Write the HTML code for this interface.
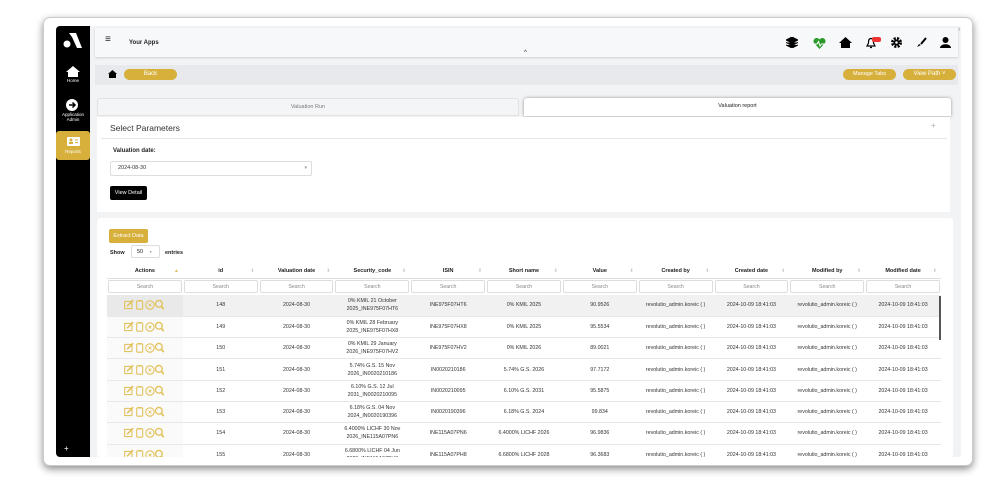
<!DOCTYPE html>
<html><head><meta charset="utf-8"><style>
*{box-sizing:border-box;margin:0;padding:0}
body{width:998px;height:483px;background:#fff;font-family:"Liberation Sans",sans-serif;position:relative;overflow:hidden;color:#222}
.a{position:absolute}
svg{display:block}
.frame{left:43px;top:17px;width:930px;height:449px;background:#fff;border-radius:7px;box-shadow:0 3px 8px rgba(0,0,0,.45);border:1px solid #ccc}
.side{left:56px;top:26px;width:34px;height:431px;background:#000;border-radius:4px 0 0 4px}
.main{left:90px;top:26px;width:871px;height:431px;background:#f2f3f5}
.hdr{left:95px;top:28px;width:863px;height:29px;background:#f7f8fa;box-shadow:0 1px 2px rgba(0,0,0,.15)}
.bc{left:95px;top:65px;width:863px;height:20px;background:#e7e9ec}
.btn{background:#d6b03a;color:#fff;border-radius:8px;font-size:6px;height:11px;line-height:11px;text-align:center}
.tab{font-size:5.5px;text-align:center;line-height:17px;color:#777}
.panel{background:#fff}
.sl{font-size:4.5px;color:#fff;text-align:center;width:34px;left:56px}
table{border-collapse:collapse;font-size:5.3px;table-layout:fixed}
td,th{text-align:center;overflow:hidden;white-space:nowrap}
th{height:13px;font-weight:bold;border-bottom:1px solid #ddd;position:relative;font-size:5.5px}
th span{position:absolute;right:4px;top:3px;color:#ccc;font-size:5px;font-weight:normal}
.sr td{height:17px;padding:1px 1px}
.sr div{border:1px solid #ddd;border-radius:2px;height:13px;line-height:12px;color:#888;font-size:5.2px}
.dr td{height:21.3px;border-bottom:1px solid #e8e8e8;line-height:8px;color:#333}
.dr td:first-child{background:#fafafa}
.dr:first-child td{background:#f1f1f1}
.dr:first-child td:first-child{background:#e9e9e9}
.ic{display:inline-block;vertical-align:middle}
</style></head><body>
<svg width="0" height="0" style="position:absolute"><defs>
<g id="act" fill="none" stroke="#e2c15a" stroke-width="0.9">
<rect x="1" y="2" width="6" height="6"/><path d="M3 6 L8 1" stroke-width="1.3"/>
<rect x="11" y="1.5" width="5" height="7" rx="0.8"/><path d="M12 1.5 h3" stroke-width="1.2"/>
<circle cx="22" cy="5" r="3.5"/><path d="M20.8 3.8 L23.2 6.2 M23.2 3.8 L20.8 6.2" stroke-width="0.6"/>
<circle cx="29.5" cy="4" r="2.8" stroke-width="1.1"/><path d="M31.5 6 L33.5 8.5" stroke-width="1.4"/>
</g></defs></svg>
<div class="a frame"></div>
<div class="a main"></div>
<div class="a side"></div>
<div class="a" style="left:61px;top:31px;width:22px;height:18px">
<svg width="22" height="18"><circle cx="6" cy="13" r="3.5" fill="#fff"/><path d="M8 2 L15 2 L21 17 L16 17 L11 6 Z" fill="#fff"/></svg></div>
<div class="a" style="left:66px;top:66px"><svg width="14" height="11"><path d="M7 0 L14 6 L12 6 L12 11 L2 11 L2 6 L0 6Z" fill="#fff"/></svg></div>
<div class="a sl" style="top:78px">Home</div>
<div class="a" style="left:66px;top:99px"><svg width="12" height="12"><circle cx="6" cy="6" r="6" fill="#fff"/><path d="M3 6 H9 M6.5 3.5 L9 6 L6.5 8.5" stroke="#000" stroke-width="1.5" fill="none"/></svg></div>
<div class="a sl" style="top:112px;line-height:5px">Application<br>Admin</div>
<div class="a" style="left:56px;top:131px;width:34px;height:29px;background:#d6b03a;border-radius:3px"></div>
<div class="a" style="left:67px;top:137px;width:13px;height:9px;background:#fff;border-radius:1px"><svg width="13" height="9"><circle cx="4" cy="3" r="1.5" fill="#d6b03a"/><rect x="2" y="5" width="4" height="2" fill="#d6b03a"/><rect x="8" y="2.5" width="3" height="1" fill="#d6b03a"/><rect x="8" y="5" width="3" height="1" fill="#d6b03a"/></svg></div>
<div class="a sl" style="top:149px">Reports</div>
<div class="a" style="left:64px;top:444px;color:#fff;font-size:8px">+</div>
<div class="a hdr"></div>
<div class="a" style="left:105px;top:34px;font-size:10px;color:#222">≡</div>
<div class="a" style="left:129px;top:40px;font-size:6px;font-weight:bold">Your Apps</div>
<div class="a" style="left:524px;top:50px;font-size:6px">^</div>
<div class="a" style="left:786px;top:37px;height:12px">
<svg style="position:absolute;left:0;top:0" width="12" height="11"><path d="M6 0 L12 3 L6 6 L0 3Z M0 5.5 L6 8.5 L12 5.5 M0 8 L6 11 L12 8" fill="#000" stroke="#000" stroke-width="1"/></svg>
<svg style="position:absolute;left:27px;top:1px" width="13" height="11"><path d="M6.5 11 L1 5 A3 3 0 0 1 6.5 1.5 A3 3 0 0 1 12 5Z" fill="#2a9a2a"/><path d="M1 6 H4 L5.5 3.5 L7 8 L8.5 6 H12" stroke="#fff" stroke-width="1" fill="none"/></svg>
<svg style="position:absolute;left:53px;top:0" width="13" height="11"><path d="M6.5 0 L13 6 L11 6 L11 11 L2 11 L2 6 L0 6Z" fill="#000"/></svg>
<svg style="position:absolute;left:80px;top:0" width="16" height="12"><path d="M5 1.5 C2.5 1.5 2.5 4 2.5 6 L1 9 H9 L7.5 6 C7.5 4 7.5 1.5 5 1.5Z M4 10.5 H6" stroke="#000" stroke-width="1.2" fill="none"/><rect x="6" y="0" width="9" height="5" rx="2" fill="#e33"/></svg>
<svg style="position:absolute;left:105px;top:0" width="11" height="11"><circle cx="5.5" cy="5.5" r="4" fill="none" stroke="#000" stroke-width="3" stroke-dasharray="2 1.2"/><circle cx="5.5" cy="5.5" r="3" fill="#000"/><circle cx="5.5" cy="5.5" r="1.3" fill="#f7f8fa"/></svg>
<svg style="position:absolute;left:130px;top:0" width="11" height="11"><path d="M10 1 L5 7" stroke="#000" stroke-width="2"/><path d="M1 10 L3 7 L5 8 Z" fill="#000"/></svg>
<svg style="position:absolute;left:154px;top:0" width="11" height="11"><circle cx="5.5" cy="3" r="3" fill="#000"/><path d="M0 11 C0 6 11 6 11 11Z" fill="#000"/></svg>
</div>
<div class="a" style="left:958px;top:26px;font-size:7px;color:#999">›</div>
<div class="a bc"></div>
<div class="a" style="left:108px;top:70px"><svg width="9" height="8"><path d="M4.5 0 L9 4 L8 4 L8 8 L1 8 L1 4 L0 4Z" fill="#000"/></svg></div>
<div class="a btn" style="left:124px;top:69px;width:53px">Back</div>
<div class="a btn" style="left:843px;top:69px;width:53px;font-size:5.5px">Manage Tabs</div>
<div class="a btn" style="left:903px;top:69px;width:53px">View Path ˅</div>
<div class="a tab" style="left:97px;top:98px;width:422px;height:18px;background:#f4f5f7;border:1px solid #e2e2e2;border-radius:3px 3px 0 0">Valuation Run</div>
<div class="a tab" style="left:524px;top:98px;width:427px;height:18px;background:#fff;border-radius:3px 3px 0 0;box-shadow:0 0 3px rgba(0,0,0,.4);color:#222">Valuation report</div>
<div class="a panel" style="left:97px;top:117px;width:853px;height:95px"></div>
<div class="a" style="left:110px;top:123px;font-size:8.5px;color:#333">Select Parameters</div>
<div class="a" style="left:931px;top:121px;font-size:8px;color:#aaa">+</div>
<div class="a" style="left:101px;top:138px;width:846px;height:1px;background:#e6e6e6"></div>
<div class="a" style="left:113px;top:148px;font-size:6px;font-weight:bold">Valuation date:</div>
<div class="a" style="left:110px;top:161px;width:202px;height:15px;border:1px solid #ddd;border-radius:2px;font-size:5.5px;line-height:13px;padding-left:7px;color:#333">2024-08-30<span style="position:absolute;right:4px;color:#999;font-size:5px">▾</span></div>
<div class="a" style="left:110px;top:186px;width:37px;height:14px;background:#000;color:#fff;border-radius:2px;font-size:5.5px;line-height:14px;text-align:center">View Detail</div>
<div class="a panel" style="left:97px;top:218px;width:856px;height:239px;border-radius:3px"></div>
<div class="a" style="left:109px;top:229px;width:39px;height:14px;background:#d6b03a;color:#fff;font-size:5.5px;line-height:14px;text-align:center;border-radius:2px">Extract Data</div>
<div class="a" style="left:110px;top:250px;font-size:5.5px;font-weight:bold">Show</div>
<div class="a" style="left:131px;top:245px;width:29px;height:13px;border:1px solid #ddd;border-radius:2px;font-size:5.5px;line-height:11px;padding-left:5px">50 <span style="color:#999;font-size:4px;margin-left:5px">▾</span></div>
<div class="a" style="left:165px;top:250px;font-size:5.5px;font-weight:bold">entries</div>
<div class="a" style="left:107px;top:265px;width:834px;height:192px;overflow:hidden">
<table style="width:834px">
<colgroup><col span="11" style="width:75.8px"></colgroup>
<thead><tr><th>Actions<span style="color:#e0c060">▲</span></th><th>id<span>⬍</span></th><th>Valuation date<span>⬍</span></th><th>Security_code<span>⬍</span></th><th>ISIN<span>⬍</span></th><th>Short name<span>⬍</span></th><th>Value<span>⬍</span></th><th>Created by<span>⬍</span></th><th>Created date<span>⬍</span></th><th>Modified by<span>⬍</span></th><th>Modified date<span>⬍</span></th></tr>
<tr class="sr"><td><div>Search</div></td><td><div>Search</div></td><td><div>Search</div></td><td><div>Search</div></td><td><div>Search</div></td><td><div>Search</div></td><td><div>Search</div></td><td><div>Search</div></td><td><div>Search</div></td><td><div>Search</div></td><td><div>Search</div></td></tr></thead>
<tbody>
<tr class="dr"><td><svg class="ic" style="margin:auto" width="45" height="12" viewBox="0 0 35 10"><use href="#act"/></svg></td><td>148</td><td>2024-08-30</td><td>0% KMIL 21 October<br>2025_INE975F07HT6</td><td>INE975F07HT6</td><td>0% KMIL 2025</td><td>90.9526</td><td>revolutio_admin.koreic ( )</td><td>2024-10-09 18:41:03</td><td>revolutio_admin.koreic ( )</td><td>2024-10-09 18:41:03</td></tr>
<tr class="dr"><td><svg class="ic" style="margin:auto" width="45" height="12" viewBox="0 0 35 10"><use href="#act"/></svg></td><td>149</td><td>2024-08-30</td><td>0% KMIL 28 February<br>2025_INE975F07HX8</td><td>INE975F07HX8</td><td>0% KMIL 2025</td><td>95.5534</td><td>revolutio_admin.koreic ( )</td><td>2024-10-09 18:41:03</td><td>revolutio_admin.koreic ( )</td><td>2024-10-09 18:41:03</td></tr>
<tr class="dr"><td><svg class="ic" style="margin:auto" width="45" height="12" viewBox="0 0 35 10"><use href="#act"/></svg></td><td>150</td><td>2024-08-30</td><td>0% KMIL 29 January<br>2026_INE975F07HV2</td><td>INE975F07HV2</td><td>0% KMIL 2026</td><td>89.0021</td><td>revolutio_admin.koreic ( )</td><td>2024-10-09 18:41:03</td><td>revolutio_admin.koreic ( )</td><td>2024-10-09 18:41:03</td></tr>
<tr class="dr"><td><svg class="ic" style="margin:auto" width="45" height="12" viewBox="0 0 35 10"><use href="#act"/></svg></td><td>151</td><td>2024-08-30</td><td>5.74% G.S. 15 Nov<br>2026_IN0020210186</td><td>IN0020210186</td><td>5.74% G.S. 2026</td><td>97.7172</td><td>revolutio_admin.koreic ( )</td><td>2024-10-09 18:41:03</td><td>revolutio_admin.koreic ( )</td><td>2024-10-09 18:41:03</td></tr>
<tr class="dr"><td><svg class="ic" style="margin:auto" width="45" height="12" viewBox="0 0 35 10"><use href="#act"/></svg></td><td>152</td><td>2024-08-30</td><td>6.10% G.S. 12 Jul<br>2031_IN0020210095</td><td>IN0020210095</td><td>6.10% G.S. 2031</td><td>95.5875</td><td>revolutio_admin.koreic ( )</td><td>2024-10-09 18:41:03</td><td>revolutio_admin.koreic ( )</td><td>2024-10-09 18:41:03</td></tr>
<tr class="dr"><td><svg class="ic" style="margin:auto" width="45" height="12" viewBox="0 0 35 10"><use href="#act"/></svg></td><td>153</td><td>2024-08-30</td><td>6.18% G.S. 04 Nov<br>2024_IN0020190396</td><td>IN0020190396</td><td>6.18% G.S. 2024</td><td>99.834</td><td>revolutio_admin.koreic ( )</td><td>2024-10-09 18:41:03</td><td>revolutio_admin.koreic ( )</td><td>2024-10-09 18:41:03</td></tr>
<tr class="dr"><td><svg class="ic" style="margin:auto" width="45" height="12" viewBox="0 0 35 10"><use href="#act"/></svg></td><td>154</td><td>2024-08-30</td><td>6.4000% LICHF 30 Nov<br>2026_INE115A07PN6</td><td>INE115A07PN6</td><td>6.4000% LICHF 2026</td><td>96.9836</td><td>revolutio_admin.koreic ( )</td><td>2024-10-09 18:41:03</td><td>revolutio_admin.koreic ( )</td><td>2024-10-09 18:41:03</td></tr>
<tr class="dr"><td><svg class="ic" style="margin:auto" width="45" height="12" viewBox="0 0 35 10"><use href="#act"/></svg></td><td>155</td><td>2024-08-30</td><td>6.6800% LICHF 04 Jun<br>2028_INE115A07PH8</td><td>INE115A07PH8</td><td>6.6800% LICHF 2028</td><td>96.3683</td><td>revolutio_admin.koreic ( )</td><td>2024-10-09 18:41:03</td><td>revolutio_admin.koreic ( )</td><td>2024-10-09 18:41:03</td></tr>
</tbody></table></div>
<div class="a" style="left:939px;top:296px;width:2px;height:44px;background:#555"></div>
</body></html>
